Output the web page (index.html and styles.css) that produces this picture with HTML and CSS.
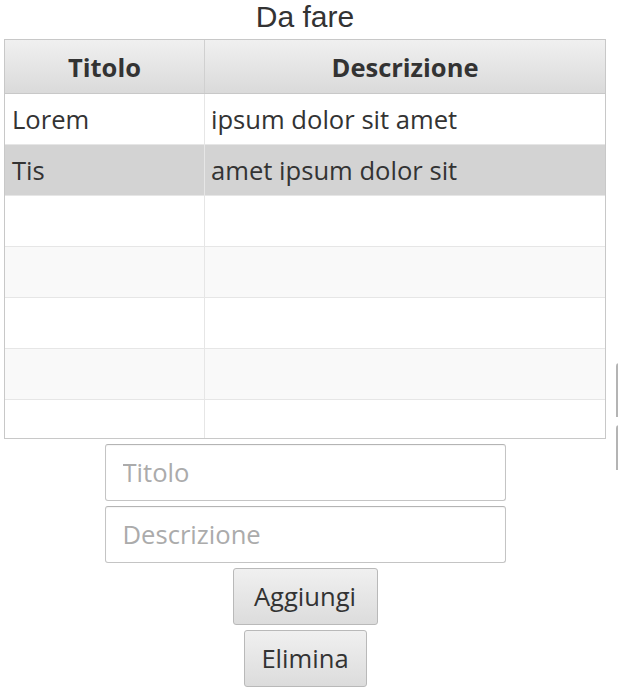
FILE: index.html
```html
<!DOCTYPE html>
<html lang="it">
<head>
<meta charset="utf-8">
<title>Da fare</title>
<link rel="stylesheet" href="styles.css">
</head>
<body>
<div class="app">
  <h1 class="title">Da fare</h1>
  <div class="table">
    <div class="thead">
      <div class="th col0">Titolo</div>
      <div class="th col1">Descrizione</div>
    </div>
    <div class="tbody">
      <div class="row"><div class="td col0">Lorem</div><div class="td col1">ipsum dolor sit amet</div></div>
      <div class="row selected"><div class="td col0">Tis</div><div class="td col1">amet ipsum dolor sit</div></div>
      <div class="row"><div class="td col0"></div><div class="td col1"></div></div>
      <div class="row odd"><div class="td col0"></div><div class="td col1"></div></div>
      <div class="row"><div class="td col0"></div><div class="td col1"></div></div>
      <div class="row odd"><div class="td col0"></div><div class="td col1"></div></div>
      <div class="row"><div class="td col0"></div><div class="td col1"></div></div>
    </div>
  </div>
  <input class="field" type="text" placeholder="Titolo">
  <input class="field" type="text" placeholder="Descrizione">
  <button class="btn btn-add" type="button">Aggiungi</button>
  <button class="btn btn-del" type="button">Elimina</button>
</div>
<div class="edge edge-a"></div>
<div class="edge edge-b"></div>
</body>
</html>
```
FILE: styles.css
```css
html, body {
  margin: 0;
  padding: 0;
  background: #ffffff;
  overflow: hidden;
}

body {
  width: 618px;
  height: 697px;
  position: relative;
  font-family: "Open Sans", "Noto Sans", sans-serif;
  color: #333333;
}

.app {
  width: 602px;
  margin-left: 4px;
  display: flex;
  flex-direction: column;
  align-items: center;
  gap: 5px;
}

.title {
  margin: 0;
  height: 34px;
  line-height: 34px;
  font-family: "Liberation Sans", Arial, sans-serif;
  font-weight: normal;
  font-size: 30px;
  color: #333333;
}

.table {
  width: 602px;
  height: 400px;
  box-sizing: border-box;
  border: 1px solid #c8c8c8;
  overflow: hidden;
  background: #ffffff;
}

.thead {
  display: grid;
  grid-template-columns: 200px 400px;
  height: 54px;
  box-sizing: border-box;
  border-bottom: 1px solid #c8c8c8;
  background: linear-gradient(to bottom, #f0f0f0, #dadada);
}

.th {
  display: flex;
  align-items: center;
  justify-content: center;
  font-weight: bold;
  font-size: 25.5px;
  color: #333333;
}

.th.col0 {
  border-right: 1px solid #d0d0d0;
}

.row {
  display: grid;
  grid-template-columns: 200px 400px;
  height: 51px;
  box-sizing: border-box;
  border-bottom: 1px solid #e6e6e6;
  background: #ffffff;
}

.row.odd {
  background: #f9f9f9;
}

.row.selected {
  background: #d3d3d3;
}

.td {
  display: flex;
  align-items: center;
  font-size: 25.6px;
  color: #333333;
}

.td.col0 {
  padding-left: 7px;
  border-right: 1px solid #e6e6e6;
}

.td.col1 {
  padding-left: 6px;
}

.field {
  display: block;
  width: 401px;
  height: 57px;
  box-sizing: border-box;
  margin: 0;
  padding: 0 17px;
  border: 1px solid #c4c4c4;
  border-top-color: #b4b4b4;
  border-radius: 3px;
  background: #ffffff;
  box-shadow: inset 0 1px 1px rgba(0, 0, 0, 0.04);
  font-family: "Open Sans", "Noto Sans", sans-serif;
  font-size: 25.6px;
  color: #333333;
  outline: none;
}

.field::placeholder {
  color: #ababab;
}

.btn {
  display: block;
  height: 57px;
  box-sizing: border-box;
  margin: 0;
  padding: 0;
  border: 1px solid #b9b9b9;
  border-radius: 3px;
  background: linear-gradient(to bottom, #f0f0f0, #dcdcdc);
  font-family: "Open Sans", "Noto Sans", sans-serif;
  font-size: 25.6px;
  color: #333333;
  text-align: center;
}

.btn-add {
  width: 145px;
}

.btn-del {
  width: 123px;
}

.edge {
  position: absolute;
  left: 616px;
  width: 6px;
  box-sizing: border-box;
  border-left: 2px solid #b4b4b4;
  border-top: 1px solid #c8c8c8;
  border-top-left-radius: 3px;
}

.edge-a {
  top: 363px;
  height: 54px;
}

.edge-b {
  top: 425px;
  height: 45px;
}
```
